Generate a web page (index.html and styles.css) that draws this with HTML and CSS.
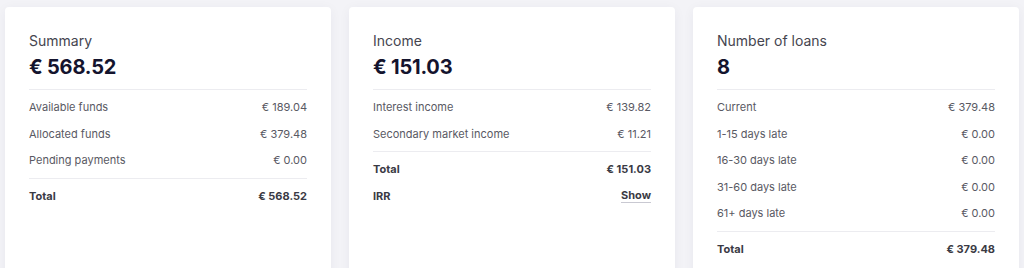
FILE: index.html
```html
<!DOCTYPE html>
<html>
<head>
<meta charset="utf-8">
<link rel="stylesheet" href="styles.css">
</head>
<body>
<div class="cards">
  <section class="card">
    <header class="card-head">
      <div class="card-title">Summary</div>
      <div class="card-amount">€ 568.52</div>
    </header>
    <div class="rows">
      <div class="row"><span>Available funds</span><span>€ 189.04</span></div>
      <div class="row"><span>Allocated funds</span><span>€ 379.48</span></div>
      <div class="row"><span>Pending payments</span><span>€ 0.00</span></div>
    </div>
    <div class="rows totals">
      <div class="row strong"><span>Total</span><span>€ 568.52</span></div>
    </div>
  </section>
  <section class="card">
    <header class="card-head">
      <div class="card-title">Income</div>
      <div class="card-amount">€ 151.03</div>
    </header>
    <div class="rows">
      <div class="row"><span>Interest income</span><span>€ 139.82</span></div>
      <div class="row"><span>Secondary market income</span><span>€ 11.21</span></div>
    </div>
    <div class="rows totals">
      <div class="row strong"><span>Total</span><span>€ 151.03</span></div>
      <div class="row strong"><span>IRR</span><a class="show-link">Show</a></div>
    </div>
  </section>
  <section class="card">
    <header class="card-head">
      <div class="card-title">Number of loans</div>
      <div class="card-amount">8</div>
    </header>
    <div class="rows">
      <div class="row"><span>Current</span><span>€ 379.48</span></div>
      <div class="row"><span>1-15 days late</span><span>€ 0.00</span></div>
      <div class="row"><span>16-30 days late</span><span>€ 0.00</span></div>
      <div class="row"><span>31-60 days late</span><span>€ 0.00</span></div>
      <div class="row"><span>61+ days late</span><span>€ 0.00</span></div>
    </div>
    <div class="rows totals">
      <div class="row strong"><span>Total</span><span>€ 379.48</span></div>
    </div>
  </section>
</div>
</body>
</html>
```

FILE: styles.css
```css
html, body {
  margin: 0;
  padding: 0;
  background: #f3f3f7;
  font-family: Inter, "Noto Sans", sans-serif;
  height: 268px;
  overflow: hidden;
}

.cards {
  display: flex;
  gap: 18px;
  padding: 7px 0 0 5px;
}

.card {
  width: 326px;
  height: 300px;
  box-sizing: border-box;
  background: #ffffff;
  border-radius: 4px;
  padding: 24px 24px 0 24px;
  box-shadow: 0 2px 12px rgba(30, 30, 70, 0.05);
}

.card-head {
  padding-bottom: 6px;
  border-bottom: 1px solid #ececf0;
}

.card-title {
  font-size: 14px;
  line-height: 20px;
  color: #45454f;
}

.card-amount {
  font-size: 20px;
  line-height: 32px;
  font-weight: 700;
  color: #14142e;
  letter-spacing: -0.2px;
}

.rows {
  padding: 4px 0;
}

.totals {
  border-top: 1px solid #ececf0;
}

.row {
  display: flex;
  justify-content: space-between;
  align-items: center;
  height: 26.5px;
  font-size: 11px;
  color: #595963;
}

.row.strong {
  font-weight: 700;
  color: #3a3a44;
}

.show-link {
  line-height: 14px;
  border-bottom: 1px solid #c9c9d2;
  color: #3a3a44;
  cursor: pointer;
}
```
